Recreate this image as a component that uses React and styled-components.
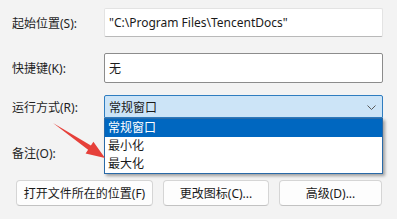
import styled, { createGlobalStyle } from "styled-components";

const Global = createGlobalStyle`
  html, body {
    margin: 0;
    padding: 0;
    background: #f3f3f3;
    font-family: "Noto Sans", "Noto Sans CJK SC", sans-serif;
    font-size: 12px;
    color: #1a1a1a;
  }
`;

const Page = styled.div`
  position: relative;
  width: 397px;
  height: 219px;
  overflow: hidden;
  background: #f3f3f3;
`;

const Form = styled.div`
  display: flex;
  flex-direction: column;
  padding: 8px 14px 0 12px;
`;

const Row = styled.div`
  display: grid;
  grid-template-columns: 92px 279px;
  align-items: center;
  height: ${(p) => p.$h}px;
  margin-top: ${(p) => p.$mt || 0}px;
`;

const Label = styled.div`
  font-size: 12px;
  color: #1f1f1f;
  font-family: "Noto Sans", "Noto Sans CJK SC", sans-serif;
  white-space: nowrap;
`;

const Field = styled.div`
  position: relative;
  box-sizing: border-box;
  height: 100%;
  display: flex;
  align-items: center;
  padding-left: 4px;
  background: #ffffff;
  border: 1px solid ${(p) => (p.$dark ? "#8c8c8c" : "#e3e3e3")};
  border-bottom-color: ${(p) => (p.$dark ? "#8c8c8c" : "#b9b9b9")};
  border-radius: 2px;
  font-size: 12px;
  white-space: nowrap;
`;

const Select = styled(Field)`
  background: #cce4f7;
  border: 1px solid #2f7dc0;
  border-radius: 2px 2px 0 0;
`;

const Chevron = styled.svg`
  position: absolute;
  right: 6px;
  top: 9px;
`;

const List = styled.div`
  position: absolute;
  left: -1px;
  top: 22px;
  width: 279px;
  box-sizing: border-box;
  background: #fff;
  border: 1px solid #2a6aa8;
  box-shadow: 2px 2px 3px rgba(0, 0, 0, 0.35);
  z-index: 2;
`;

const Item = styled.div`
  height: 18px;
  line-height: 18px;
  padding-left: 3px;
  font-size: 12px;
  background: ${(p) => (p.$active ? "#0067c0" : "transparent")};
  color: ${(p) => (p.$active ? "#fff" : "#1a1a1a")};
`;

const Buttons = styled.div`
  display: flex;
  gap: 10px;
  margin-top: 13px;
  padding-left: 4px;
`;

const Button = styled.button`
  box-sizing: border-box;
  width: ${(p) => p.$w}px;
  height: 26px;
  background: #fdfdfd;
  border: 1px solid #d5d5d5;
  border-bottom-color: #c2c2c2;
  border-radius: 4px;
  font-family: "Noto Sans", "Noto Sans CJK SC", sans-serif;
  font-size: 12px;
  color: #1a1a1a;
  padding: 0;
`;

const Arrow = styled.svg`
  position: absolute;
  left: 0;
  top: 0;
  pointer-events: none;
  z-index: 3;
`;

export default function App() {
  return (
    <Page>
      <Global />
      <Form>
        <Row $h={29}>
          <Label>起始位置(S):</Label>
          <Field>"C:\Program Files\TencentDocs"</Field>
        </Row>
        <Row $h={30} $mt={16}>
          <Label>快捷键(K):</Label>
          <Field $dark>无</Field>
        </Row>
        <Row $h={23} $mt={12}>
          <Label>运行方式(R):</Label>
          <Select>
            常规窗口
            <Chevron width="9" height="5" viewBox="0 0 9 5">
              <path d="M0.5 0.5 L4.5 4.5 L8.5 0.5" fill="none" stroke="#5a5a5a" strokeWidth="1" />
            </Chevron>
            <List>
              <Item $active>常规窗口</Item>
              <Item>最小化</Item>
              <Item>最大化</Item>
            </List>
          </Select>
        </Row>
        <Row $h={29} $mt={20}>
          <Label>备注(O):</Label>
          <Field />
        </Row>
        <Buttons>
          <Button $w={137}>打开文件所在的位置(F)</Button>
          <Button $w={106}>更改图标(C)...</Button>
          <Button $w={103}>高级(D)...</Button>
        </Buttons>
      </Form>
      <Arrow width="397" height="219" viewBox="0 0 397 219">
        <polygon
          points="53,123 90.9,145.5 93.4,141.8 105,158 85.6,153.4 88.1,149.7"
          fill="#e6403a"
        />
      </Arrow>
    </Page>
  );
}
